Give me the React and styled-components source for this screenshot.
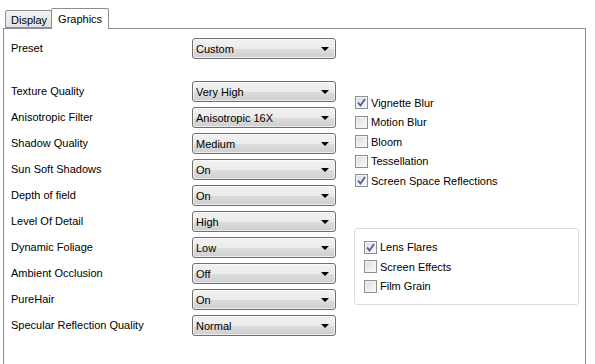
import React from "react"
import styled, { createGlobalStyle } from "styled-components"

const GlobalStyle = createGlobalStyle`
  html, body {
    margin: 0;
    padding: 0;
    background: #ffffff;
  }
  body {
    font-family: "Liberation Sans", Arial, sans-serif;
    font-size: 11px;
    color: #000;
  }
`

const Window = styled.div`
  width: 595px;
  height: 364px;
  overflow: hidden;
  background: #ffffff;
  padding: 8px 0 0 3px;
  box-sizing: border-box;
`

const TabBar = styled.div`
  display: flex;
  align-items: flex-end;
  height: 20px;
  padding-left: 2px;
  position: relative;
  z-index: 1;
`

const Tab = styled.div`
  box-sizing: border-box;
  height: ${p => (p.$active ? "21px" : "18px")};
  padding: ${p => (p.$active ? "3px 6px 0 6px" : "2px 4px 0 5px")};
  margin-bottom: ${p => (p.$active ? "-1px" : "0")};
  border: 1px solid #8e8f8f;
  border-bottom: ${p => (p.$active ? "none" : "1px solid #8e8f8f")};
  border-radius: 2px 2px 0 0;
  background: ${p => (p.$active ? "#ffffff" : "linear-gradient(#f2f2f2, #e2e2e2)")};
  margin-left: ${p => (p.$active ? "-1px" : "0")};
  font-size: 11px;
  line-height: 14px;
`

const Pane = styled.div`
  width: 583px;
  height: 340px;
  box-sizing: border-box;
  border: 1px solid #898c95;
  border-bottom: none;
  background: #fff;
  padding: 9px 0 0 7px;
  display: flex;
`

const LeftColumn = styled.div`
  display: flex;
  flex-direction: column;
  width: 325px;
`

const Row = styled.div`
  display: grid;
  grid-template-columns: 181px 144px;
  align-items: center;
  height: 21px;
  margin-bottom: ${p => p.$gap || 5}px;
`

const Label = styled.div`
  padding-bottom: 1px;
`

const Combo = styled.div`
  box-sizing: border-box;
  height: 21px;
  border: 1px solid #707070;
  border-radius: 3px;
  background: linear-gradient(#f2f2f2 0%, #ebebeb 50%, #dddddd 51%, #cfcfcf 100%);
  box-shadow: inset 0 0 0 1px rgba(255, 255, 255, 0.6);
  display: flex;
  align-items: center;
  justify-content: space-between;
  padding: 0 6px 0 3px;
`

const Arrow = styled.span`
  width: 0;
  height: 0;
  border-left: 4px solid transparent;
  border-right: 4px solid transparent;
  border-top: 4px solid #000;
`

const RightColumn = styled.div`
  display: flex;
  flex-direction: column;
  padding-left: 19px;
  padding-top: 55px;
`

const CheckList = styled.div`
  display: flex;
  flex-direction: column;
`

const CheckRow = styled.label`
  display: flex;
  align-items: center;
  gap: 3px;
  height: 19.5px;
`

const Box = styled.span`
  width: 13px;
  height: 13px;
  box-sizing: border-box;
  border: 1px solid #8e8f8f;
  background: linear-gradient(135deg, #dcdcdc, #fbfbfb);
  box-shadow: inset 0 0 0 1px #f4f4f4;
  display: flex;
  align-items: center;
  justify-content: center;
`

const GroupBox = styled.div`
  box-sizing: border-box;
  width: 225px;
  height: 77px;
  margin-top: 37px;
  margin-left: -1px;
  border: 1px solid #d5dfe5;
  border-radius: 3px;
  padding: 9px 0 0 9px;
`

const Check = ({ checked, children }) => (
  <CheckRow>
    <Box>
      {checked && (
        <svg width="9" height="9" viewBox="0 0 9 9">
          <path d="M1 4.5 L3.5 7.5 L8 1" fill="none" stroke="#4a5f97" strokeWidth="1.8" />
        </svg>
      )}
    </Box>
    <span>{children}</span>
  </CheckRow>
)

const rows = [
  ["Texture Quality", "Very High"],
  ["Anisotropic Filter", "Anisotropic 16X"],
  ["Shadow Quality", "Medium"],
  ["Sun Soft Shadows", "On"],
  ["Depth of field", "On"],
  ["Level Of Detail", "High"],
  ["Dynamic Foliage", "Low"],
  ["Ambient Occlusion", "Off"],
  ["PureHair", "On"],
  ["Specular Reflection Quality", "Normal"],
]

export default function App() {
  return (
    <Window>
      <GlobalStyle />
      <TabBar>
        <Tab>Display</Tab>
        <Tab $active>Graphics</Tab>
      </TabBar>
      <Pane>
        <LeftColumn>
          <Row $gap={22}>
            <Label>Preset</Label>
            <Combo>Custom<Arrow /></Combo>
          </Row>
          {rows.map(([label, value]) => (
            <Row key={label}>
              <Label>{label}</Label>
              <Combo>{value}<Arrow /></Combo>
            </Row>
          ))}
        </LeftColumn>
        <RightColumn>
          <CheckList>
            <Check checked>Vignette Blur</Check>
            <Check>Motion Blur</Check>
            <Check>Bloom</Check>
            <Check>Tessellation</Check>
            <Check checked>Screen Space Reflections</Check>
          </CheckList>
          <GroupBox>
            <CheckList>
              <Check checked>Lens Flares</Check>
              <Check>Screen Effects</Check>
              <Check>Film Grain</Check>
            </CheckList>
          </GroupBox>
        </RightColumn>
      </Pane>
    </Window>
  )
}
